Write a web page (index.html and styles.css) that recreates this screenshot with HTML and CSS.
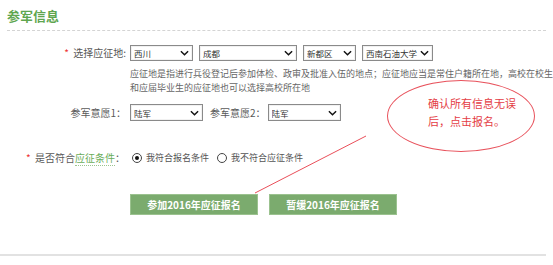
FILE: index.html
```html
<!DOCTYPE html>
<html lang="zh-CN">
<head>
    <meta charset="UTF-8">
    <title>参军信息</title>
    <link rel="stylesheet" href="styles.css">
</head>
<body>

<div class="panel">
    <h2 class="title">参军信息</h2>

    <form class="enlist-form">
        <!-- 应征地 -->
        <div class="row row-place">
            <label class="label"><span class="star">*</span> 选择应征地:</label>
            <div class="controls">
                <span class="select w-prov">
                    <select><option>西川</option></select>
                    <svg class="arrow" viewBox="0 0 10 6"><path d="M1 1l4 4 4-4" /></svg>
                </span>
                <span class="select w-city">
                    <select><option>成都</option></select>
                    <svg class="arrow" viewBox="0 0 10 6"><path d="M1 1l4 4 4-4" /></svg>
                </span>
                <span class="select w-area">
                    <select><option>新都区</option></select>
                    <svg class="arrow" viewBox="0 0 10 6"><path d="M1 1l4 4 4-4" /></svg>
                </span>
                <span class="select w-school">
                    <select><option>西南石油大学</option></select>
                    <svg class="arrow" viewBox="0 0 10 6"><path d="M1 1l4 4 4-4" /></svg>
                </span>
            </div>
        </div>
        <p class="help">应征地是指进行兵役登记后参加体检、政审及批准入伍的地点；应征地应当是常住户籍所在地，高校在校生<br>和应届毕业生的应征地也可以选择高校所在地</p>

        <!-- 参军意愿 -->
        <div class="row row-wish">
            <label class="label">参军意愿1：</label>
            <div class="controls">
                <span class="select w-wish">
                    <select><option>陆军</option></select>
                    <svg class="arrow" viewBox="0 0 10 6"><path d="M1 1l4 4 4-4" /></svg>
                </span>
                <label class="label-inline">参军意愿2：</label>
                <span class="select w-wish">
                    <select><option>陆军</option></select>
                    <svg class="arrow" viewBox="0 0 10 6"><path d="M1 1l4 4 4-4" /></svg>
                </span>
            </div>
        </div>

        <!-- 应征条件 -->
        <div class="row row-cond">
            <label class="label"><span class="star">*</span> 是否符合<a href="#" class="cond-link">应征条件</a>：</label>
            <div class="controls">
                <label class="radio"><input type="radio" name="cond" checked> 我符合报名条件</label>
                <label class="radio"><input type="radio" name="cond"> 我不符合应征条件</label>
            </div>
        </div>

        <div class="buttons">
            <button type="button" class="btn">参加2016年应征报名</button>
            <button type="button" class="btn">暂缓2016年应征报名</button>
        </div>
    </form>

    <!-- 标注 -->
    <svg class="pointer" width="553" height="265"><line x1="255" y1="193" x2="366" y2="136" /></svg>
    <div class="note">确认所有信息无误<br>后，点击报名。</div>
</div>

</body>
</html>
```

FILE: styles.css
```css
body {
    margin: 0;
    font-family: "Noto Sans CJK SC", "Liberation Sans", sans-serif;
    color: #595959;
    background: #fff;
}

.panel {
    position: relative;
    width: 546px;
    height: 254px;
    border-bottom: 2px solid #e2e2e2;
}

.title {
    margin: 0 0 0 7px;
    padding-top: 7px;
    height: 23px;
    font-size: 13px;
    line-height: 17px;
    color: #5ea64f;
    border-bottom: 1px dashed #d4d4d4;
}

.enlist-form {
    padding-top: 14px;
}

.row {
    display: flex;
    align-items: center;
    line-height: 14px;
}

.label {
    width: 126px;
    padding-right: 4px;
    text-align: right;
    font-size: 10px;
    white-space: nowrap;
}

.star {
    color: #e33;
    margin-right: 2px;
}

.controls {
    display: flex;
    align-items: center;
    gap: 6px;
}

.select {
    position: relative;
    display: block;
    height: 16px;
}

.select select {
    appearance: none;
    display: block;
    box-sizing: border-box;
    width: 100%;
    height: 100%;
    margin: 0;
    padding: 0 0 0 3px;
    border: 1px solid #8a8a8a;
    border-radius: 0;
    box-shadow: inset 0 0 0 1px #f1f1f1;
    background: #fff;
    font-family: inherit;
    font-size: 8.5px;
    color: #333;
}

.arrow {
    position: absolute;
    right: 4px;
    top: 5px;
    width: 9px;
    height: 6px;
    fill: none;
    stroke: #111;
    stroke-width: 1.6;
}

.w-prov { width: 63px; }
.w-city { width: 98px; }
.w-area { width: 53px; }
.w-school { width: 71px; }
.w-wish { width: 73px; height: 17px; }
.w-wish .arrow { top: 6px; }

.help {
    margin: 6px 0 0 130px;
    font-size: 9px;
    line-height: 14px;
    color: #666;
    white-space: nowrap;
}

.row-wish {
    margin-top: 9px;
}

.label-inline {
    font-size: 10px;
    white-space: nowrap;
}

.row-wish .controls {
    gap: 2px;
}

.row-wish .label-inline {
    margin-left: 5px;
}

.row-cond {
    margin-top: 30px;
}

.row-cond .label {
    box-sizing: border-box;
    width: 131px;
    padding: 0 0 0 26px;
    text-align: left;
}

.cond-link {
    color: #6aad5a;
    text-decoration: none;
    border-bottom: 1px dotted #9cc48f;
}

.row-cond .controls {
    gap: 8px;
    margin-left: 1px;
}

.radio {
    display: flex;
    align-items: center;
    gap: 4px;
    font-size: 9px;
    color: #555;
}

.radio input {
    appearance: none;
    position: relative;
    width: 10px;
    height: 10px;
    margin: 0;
    border: 1px solid #444;
    border-radius: 50%;
    background: #fff;
}

.radio input:checked::after {
    content: "";
    position: absolute;
    left: 2px;
    top: 2px;
    width: 4px;
    height: 4px;
    border-radius: 50%;
    background: #111;
}

.buttons {
    display: flex;
    gap: 11px;
    margin: 29px 0 0 130px;
}

.btn {
    width: 128px;
    height: 21px;
    padding: 0;
    border: 1px solid #9bc28f;
    background-color: #7bab6e;
    color: #fff;
    font-family: inherit;
    font-size: 10px;
    font-weight: bold;
    cursor: pointer;
}

.pointer {
    position: absolute;
    left: 0;
    top: 0;
    pointer-events: none;
}

.pointer line {
    stroke: #ea4f5a;
    stroke-width: 1;
}

.note {
    position: absolute;
    left: 387px;
    top: 80px;
    width: 148px;
    height: 72px;
    box-sizing: border-box;
    padding: 13px 0 0 40px;
    border: 1px solid #e8525c;
    border-radius: 50%;
    font-size: 11px;
    line-height: 18px;
    color: #e43d45;
    white-space: nowrap;
}
```
